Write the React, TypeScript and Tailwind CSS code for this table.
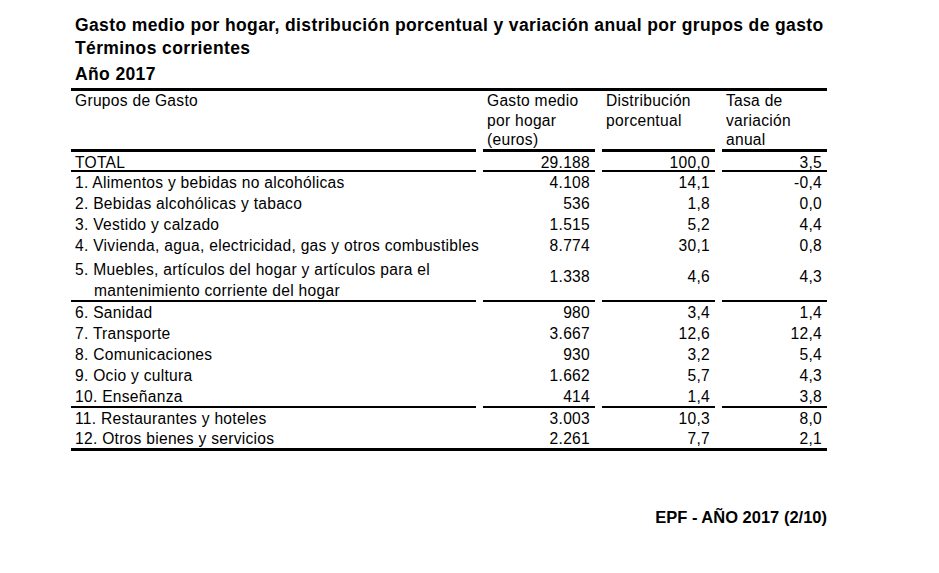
import React from "react";

type Row = { label: React.ReactNode; a: string; b: string; c: string };

const rows1: Row[] = [
  { label: "1. Alimentos y bebidas no alcohólicas", a: "4.108", b: "14,1", c: "-0,4" },
  { label: "2. Bebidas alcohólicas y tabaco", a: "536", b: "1,8", c: "0,0" },
  { label: "3. Vestido y calzado", a: "1.515", b: "5,2", c: "4,4" },
  { label: "4. Vivienda, agua, electricidad, gas y otros combustibles", a: "8.774", b: "30,1", c: "0,8" },
];
const rows2: Row[] = [
  { label: "6. Sanidad", a: "980", b: "3,4", c: "1,4" },
  { label: "7. Transporte", a: "3.667", b: "12,6", c: "12,4" },
  { label: "8. Comunicaciones", a: "930", b: "3,2", c: "5,4" },
  { label: "9. Ocio y cultura", a: "1.662", b: "5,7", c: "4,3" },
  { label: "10. Enseñanza", a: "414", b: "1,4", c: "3,8" },
];
const rows3: Row[] = [
  { label: "11. Restaurantes y hoteles", a: "3.003", b: "10,3", c: "8,0" },
  { label: "12. Otros bienes y servicios", a: "2.261", b: "7,7", c: "2,1" },
];

function Cells({ r, h, last, pt = "pt-[1px]" }: { r: Row; h: string; last?: boolean; pt?: string }) {
  const b = last ? "border-b-2 border-black" : "";
  return (
    <>
      <div className={`${h} ${b} ${pt} pl-[4px] flex items-center whitespace-nowrap`}>{r.label}</div>
      <div className={`${h} ${b} ${pt} pr-[5px] flex items-center justify-end`}>{r.a}</div>
      <div className={`${h} ${b} ${pt} pr-[5px] flex items-center justify-end`}>{r.b}</div>
      <div className={`${h} ${b} ${pt} pr-[5px] flex items-center justify-end`}>{r.c}</div>
    </>
  );
}

export default function App() {
  return (
    <div className="w-[939px] h-[573px] bg-white text-black" style={{ fontFamily: '"Liberation Sans", Arial, sans-serif' }}>
      <div className="pl-[75px] pt-[14px] font-bold text-[17.5px] leading-[23px] tracking-[0.38px]">
        <div className="whitespace-nowrap">Gasto medio por hogar, distribución porcentual y variación anual por grupos de gasto</div>
        <div>Términos corrientes</div>
        <div className="mt-[3px]">Año 2017</div>
      </div>
      <div className="ml-[71px] mt-[2px] w-[756px] border-t-[3px] border-b-[3px] border-black text-[15.6px] tracking-[0.28px]">
        <div className="grid grid-cols-[405px_112px_113px_105px] gap-x-[7px]">
          <div className="border-b-[3px] border-black pl-[4px] leading-[19.5px] h-[61px]">Grupos de Gasto</div>
          <div className="border-b-[3px] border-black pl-[4px] leading-[19.5px] h-[61px] whitespace-nowrap">Gasto medio<br />por hogar<br />(euros)</div>
          <div className="border-b-[3px] border-black pl-[4px] leading-[19.5px] h-[61px] whitespace-nowrap">Distribución<br />porcentual</div>
          <div className="border-b-[3px] border-black pl-[4px] leading-[19.5px] h-[61px] whitespace-nowrap">Tasa de<br />variación<br />anual</div>

          <Cells r={{ label: "TOTAL", a: "29.188", b: "100,0", c: "3,5" }} h="h-[20px]" last pt="pt-[3px]" />
          {rows1.map((r) => (
            <Cells key={r.a} r={r} h="h-[21px]" />
          ))}
          <div className="h-[46px] border-b-2 border-black pl-[4px] pt-[3px] leading-[21px] whitespace-nowrap">
            <div>5. Muebles, artículos del hogar y artículos para el</div>
            <div className="pl-[19px]">mantenimiento corriente del hogar</div>
          </div>
          <div className="h-[46px] border-b-2 border-black pr-[5px] flex items-center justify-end pb-[2px]">1.338</div>
          <div className="h-[46px] border-b-2 border-black pr-[5px] flex items-center justify-end pb-[2px]">4,6</div>
          <div className="h-[46px] border-b-2 border-black pr-[5px] flex items-center justify-end pb-[2px]">4,3</div>
          {rows2.map((r, i) => (
            <Cells key={r.a} r={r} h={i === 4 ? "h-[22px]" : "h-[21px]"} last={i === 4} />
          ))}
          {rows3.map((r) => (
            <Cells key={r.a} r={r} h="h-[20px]" pt="pt-[2px]" />
          ))}
        </div>
      </div>
      <div className="w-[827px] mt-[54px] text-right font-bold text-[16.5px]">EPF - AÑO 2017 (2/10)</div>
    </div>
  );
}
